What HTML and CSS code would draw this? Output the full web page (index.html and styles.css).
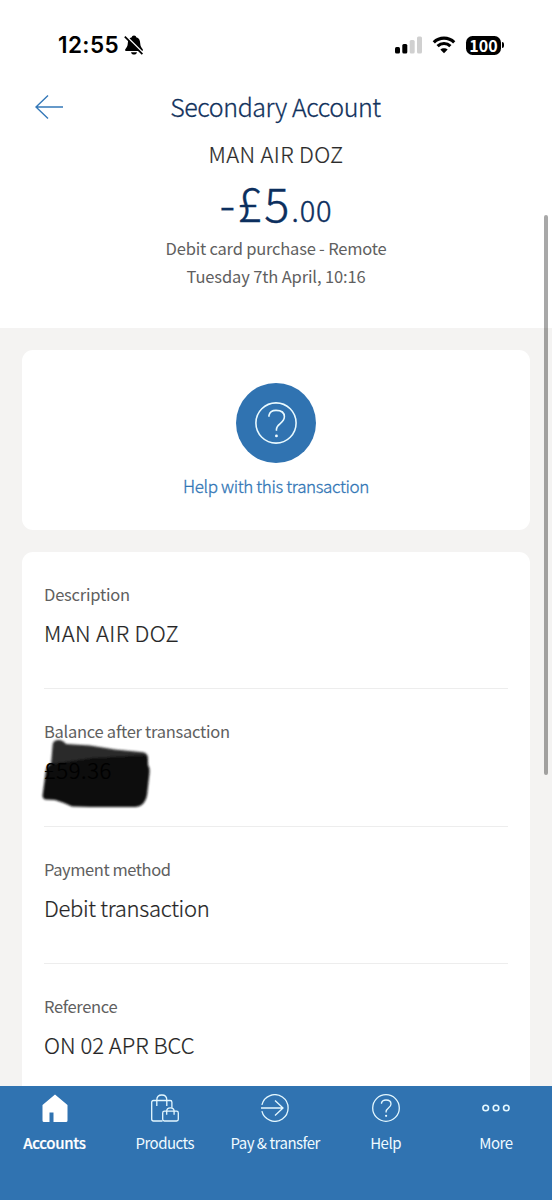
FILE: index.html
```html
<!DOCTYPE html>
<html lang="en">
<head>
<meta charset="utf-8">
<title>Transaction details</title>
<link rel="stylesheet" href="styles.css">
</head>
<body>
<div class="phone">
  <header class="header">
    <div class="status">
      <div class="status-left">
        <span class="clock">12:55</span>
        <svg class="bell" width="20" height="20" viewBox="0 0 20 20"><path d="M10 .5c1.500 0 2 .8 2.200 1.700 2.800.7 3.800 2.900 4 6 .1 3.300 1.300 4.200 2.500 6 .6 1-.1 1.900-1.200 1.900h-15c-1.100 0-1.800-.9-1.200-1.900 1.200-1.800 2.400-2.700 2.500-6 .2-3.100 1.200-5.300 4-6C8 1.300 8.500.5 10 .5z"/><path d="M7 17.200h6c-.3 1.500-1.500 2.300-3 2.300s-2.700-.8-3-2.300z"/><path class="bell-gap" d="M1.500.8l18 18"/><path class="bell-slash" d="M.8 1.600l17.600 17.600"/></svg>
      </div>
      <div class="status-right">
        <svg width="27" height="18" viewBox="0 0 27 18"><rect x="0" y="11" width="5" height="6.500" rx="1.500"/><rect x="7.300" y="8" width="5" height="9.500" rx="1.500"/><rect class="dim" x="14.700" y="4" width="5" height="13.500" rx="1.500"/><rect class="dim" x="22" y="0.500" width="5" height="17" rx="1.500"/></svg>
        <svg class="wifi" width="24" height="18" viewBox="0 0 24 18"><path d="M1.800 6.400C7.500 .8 16.500 .8 22.200 6.400M5.600 10.100c3.600-3.500 9.200-3.500 12.800 0"/><path class="solid" d="M12 17.300l-3.700-3.700c2-1.900 5.400-1.900 7.400 0z"/></svg>
        <div class="battery"><span class="charge">100</span><i class="cap"></i></div>
      </div>
    </div>
    <div class="titlebar">
      <svg class="back" width="28" height="26" viewBox="0 0 28 26"><path d="M1 13h27M13 1.500L1 13l12 11.500"/></svg>
      <h1 class="title">Secondary Account</h1>
    </div>
    <div class="payee v-caps">MAN AIR DOZ</div>
    <div class="amount"><span class="whole">-£5</span><span class="pence">.00</span></div>
    <div class="meta kind">Debit card purchase - Remote</div>
    <div class="meta when">Tuesday 7th April, 10:16</div>
  </header>
  <main class="content">
    <section class="card help-card">
      <div class="help-disc">
        <svg width="42" height="42" viewBox="0 0 28 28"><circle cx="14" cy="14" r="13.400"/><path d="M9.300 9.800V9q.7-3.400 4.700-3.400 5.600 0 5.600 4.300c0 4.200-5.300 4.600-5.300 8.200v1"/><circle class="dot" cx="14.300" cy="22.600" r=".95"/></svg>
      </div>
      <div class="help-label">Help with this transaction</div>
    </section>
    <section class="card details">
      <div class="row"><div class="label l-desc">Description</div><div class="value v-caps">MAN AIR DOZ</div></div>
      <div class="row"><div class="label l-bal">Balance after transaction</div><div class="value v-bal">£59.36
        <svg class="scribble" width="114" height="78" viewBox="0 0 114 78"><defs><filter id="soft"><feGaussianBlur stdDeviation="1"/></filter></defs><g filter="url(#soft)"><path fill="#2b2b2b" d="M12.700 8q1-4 6-4 4 0 7.300 4l24 1.600 25 4 28 2.700q5 1 5 6l-1 14H6q1-6 5-8z"/><path fill="#101010" d="M6 34q1-5 5-6l40-6 54-3q3 1 3 10 2 3 1.500 8l-2 18q-1 15-12 16H50L32 70.500 24 67l-9-3-10-.5q-3-1-2.300-5z"/></g></svg>
        <span class="ghost" aria-hidden="true">£59.36</span></div></div>
      <div class="row"><div class="label l-pay">Payment method</div><div class="value v-debit">Debit transaction</div></div>
      <div class="row"><div class="label l-ref">Reference</div><div class="value v-ref">ON 02 APR BCC</div></div>
    </section>
  </main>
  <nav class="tabs">
    <div class="tab active"><svg width="28" height="28" viewBox="0 0 28 28"><path class="fill" d="M14 .5L26.500 11v15.500q0 1.500-1.500 1.500H12.500v-9.500h-4V28H3q-1.500 0-1.500-1.500V11z"/></svg><span>Accounts</span></div>
    <div class="tab"><svg width="28" height="28" viewBox="0 0 28 28"><path d="M11.500 27H2.500Q.7 27 .7 25.200V8.200Q.7 6.500 2.500 6.500h16.700q1.700 0 1.700 1.700v5.500M5.800 12V6q0-5 5-5t5 5v6"/><rect x="11.700" y="17.200" width="15.600" height="9.800" rx="1.700"/><path d="M15.700 20.700v-3.500q0-3.300 3.700-3.300t3.700 3.300v3.500"/></svg><span>Products</span></div>
    <div class="tab"><svg width="28" height="28" viewBox="0 0 28 28"><path d="M.9 10.800a13.300 13.300 0 1 1 0 6.400M0 14h22M14 6.500l8 7.500-8 7.500"/></svg><span>Pay &amp; transfer</span></div>
    <div class="tab"><svg width="28" height="28" viewBox="0 0 28 28"><circle cx="14" cy="14" r="13.300"/><path d="M9.500 9.800V9q.7-3 4.500-3 5 0 5 4c0 3.800-4.900 4.200-4.900 7.600v1"/><circle class="dot" cx="14.100" cy="21.800" r="1.100"/></svg><span>Help</span></div>
    <div class="tab"><svg class="thick" width="28" height="28" viewBox="0 0 28 28"><circle cx="3.700" cy="14" r="2.800"/><circle cx="14" cy="14" r="2.800"/><circle cx="24.300" cy="14" r="2.800"/></svg><span>More</span></div>
  </nav>
  <div class="scrollbar"></div>
</div>
</body>
</html>
```
FILE: styles.css
```css
* { box-sizing: border-box; }
body { margin: 0; background: #f4f3f2; font-family: "Noto Sans CJK SC", "Open Sans", sans-serif; }
.phone { position: relative; width: 552px; height: 1200px; overflow: hidden; display: flex; flex-direction: column; }
.header { height: 328px; flex: none; background: #fff; text-align: center; white-space: nowrap; }
.status { height: 88px; padding: 2px 48px 0 58px; display: flex; justify-content: space-between; align-items: center; }
.status-left, .status-right { display: flex; align-items: center; }
.clock { font: 600 22.500px/28px Inter, sans-serif; color: #000; letter-spacing: .4px; }
.bell { margin-left: 5px; overflow: visible; }
.bell-gap { stroke: #fff; stroke-width: 2.200; }
.bell-slash { stroke: #000; stroke-width: 1.800; }
.status-right { gap: 10px; }
.dim { fill: #d0d0d0; }
.wifi { fill: none; stroke: #000; stroke-width: 3.200; }
.solid { fill: #000; stroke: none; }
.battery { display: flex; align-items: center; gap: 1px; }
.charge { width: 35px; height: 19px; border-radius: 6.500px; background: #000; color: #fff; font: 700 16px/19px "Noto Sans CJK SC", sans-serif; text-align: center; }
.cap { width: 2px; height: 6px; border-radius: 0 2px 2px 0; background: #000; }
.titlebar { height: 38px; padding: 0 36px 0 35px; display: grid; grid-template-columns: 28px 1fr 28px; align-items: center; }
.back { fill: none; stroke: #3478b8; stroke-width: 1.400; }
.title { margin: -3px 0 0; color: #10315c; font-weight: 300; font-size: 25px; line-height: 38px; letter-spacing: -.43px; -webkit-text-stroke: .3px; }
.payee { color: #2b2b2b; font-weight: 300; font-size: 22px; line-height: 30px; margin-top: 12px; -webkit-text-stroke: .2px; }
.amount { display: flex; justify-content: center; align-items: baseline; height: 60px; margin-top: 4px; color: #0c2f5e; font-weight: 300; line-height: 60px; -webkit-text-stroke: .4px; }
.whole { font-size: 47px; letter-spacing: 2px; }
.pence { font-size: 29px; letter-spacing: .9px; }
.meta { position: relative; top: 2px; color: #606060; font-size: 16.500px; line-height: 28px; }
.kind { letter-spacing: -.2px; }
.when { letter-spacing: -.14px; }
.content { flex: 1; min-height: 0; padding: 22px 22px 0; display: flex; flex-direction: column; gap: 22px; overflow: hidden; }
.card { flex: none; background: #fff; border-radius: 11px; }
.help-card { height: 180px; padding-top: 33px; display: flex; flex-direction: column; align-items: center; }
.help-disc { width: 80px; height: 80px; border-radius: 50%; background: #3073b1; display: flex; align-items: center; justify-content: center; fill: none; stroke: #e9faff; stroke-width: 1.050; }
.dot { fill: #f0fbff; stroke: none; }
.help-label { margin-top: 9px; color: #3075b5; font-size: 17px; line-height: 28px; font-weight: 300; letter-spacing: -.37px; -webkit-text-stroke: .3px; }
.details { padding: 0 22px; }
.row { height: 137.400px; padding-top: 28px; border-bottom: 1px solid #ededed; white-space: nowrap; }
.label { color: #606060; font-size: 16.500px; line-height: 28px; }
.l-desc { letter-spacing: -.22px; }
.l-bal { letter-spacing: -.27px; }
.l-pay { letter-spacing: -.44px; }
.l-ref { letter-spacing: -.35px; }
.value { color: #252525; font-size: 22px; line-height: 30px; font-weight: 300; margin-top: 9px; -webkit-text-stroke: .2px; }
.v-caps { letter-spacing: .35px; }
.v-debit { letter-spacing: -.3px; }
.v-bal { position: relative; letter-spacing: .6px; }
.scribble { position: absolute; left: -4px; top: -18px; }
.ghost { position: absolute; left: 0; top: 0; color: #000; }
.tabs { height: 114px; flex: none; background: #3073b1; color: #effaff; display: grid; grid-template-columns: repeat(5, 110.400px); padding-top: 8px; }
.tab { display: flex; flex-direction: column; align-items: center; gap: 9px; font-size: 15px; line-height: 24px; white-space: nowrap; letter-spacing: -.5px; }
.tab span { position: relative; left: -.8px; }
.tab svg { position: relative; left: -.5px; fill: none; stroke: #e4f8ff; stroke-width: 1.300; }
.tab .fill { fill: #fff; stroke: none; }
.tab .dot { fill: #e4f8ff; stroke: none; }
.tab .thick { stroke-width: 1.600; }
.active { font-weight: 500; color: #fff; -webkit-text-stroke: .2px; letter-spacing: -.3px; }
.scrollbar { position: absolute; left: 544px; top: 215px; width: 4px; height: 560px; border-radius: 2px; background: rgba(0,0,0,.34); }
```
